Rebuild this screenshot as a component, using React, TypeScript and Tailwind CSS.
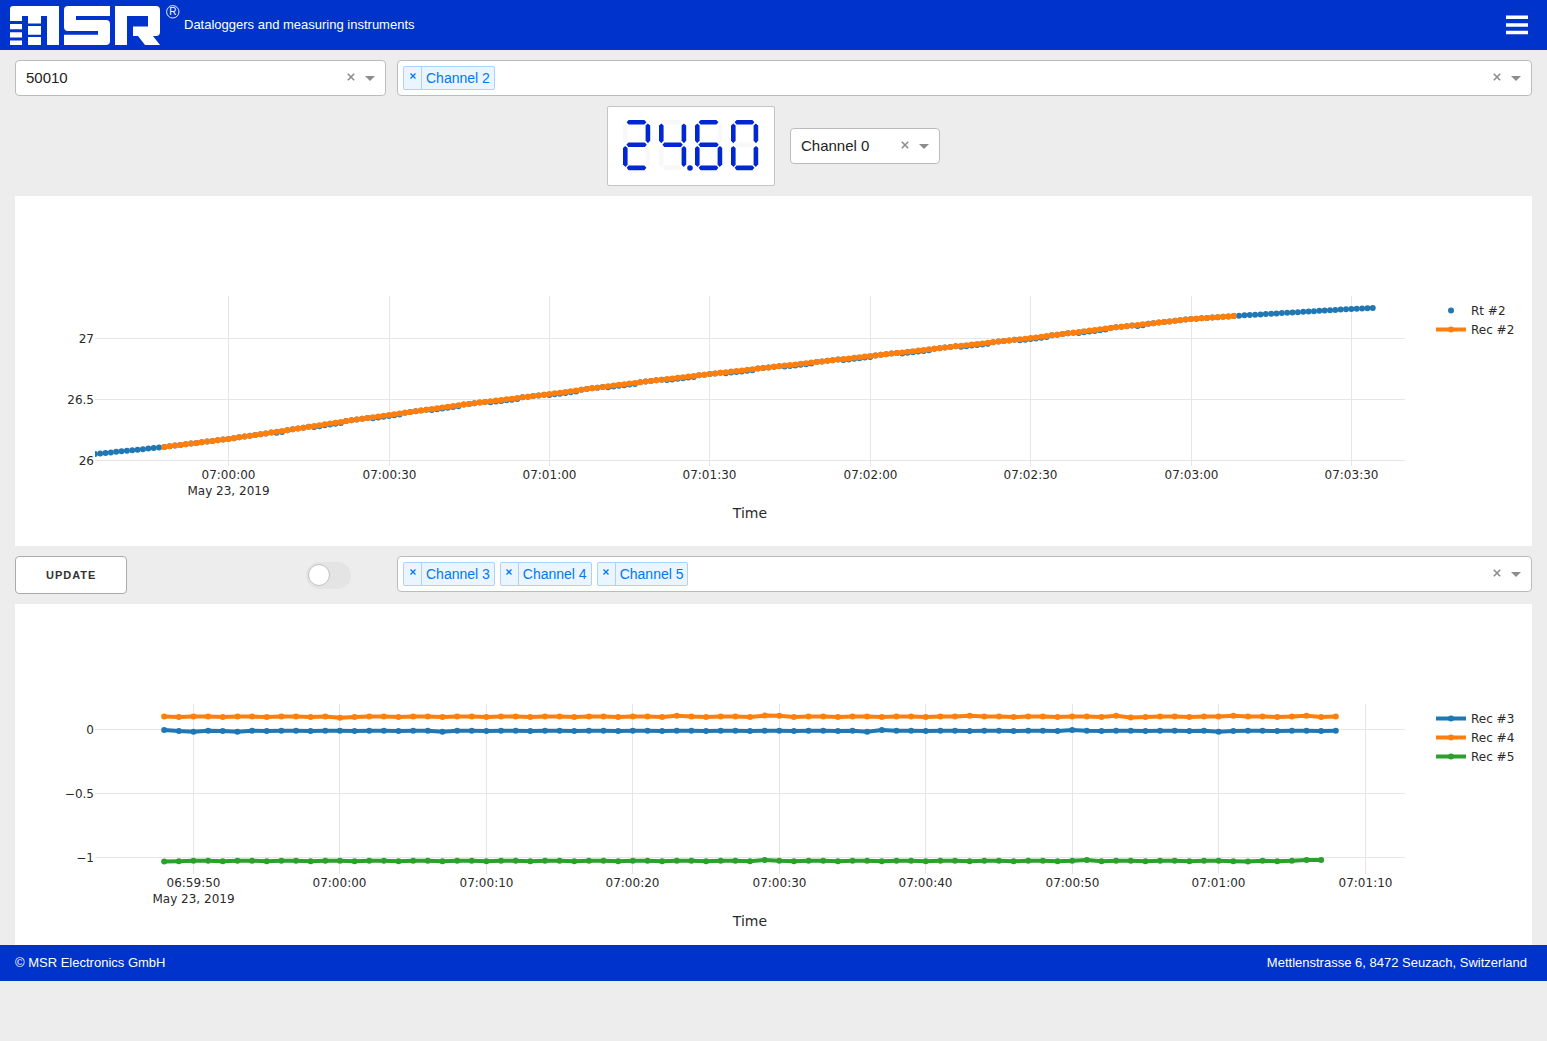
import React, { useState } from "react";

type Point = [number, number];
type Series = { name: string; color: string; points: Point[]; mode: "markers" | "lines" };
type Tick = { pos: number; label: string };

// piecewise curve of the temperature trace, in plot units
const RAMP: Point[] = [
  [80, 258], [149, 251], [213, 243], [267, 235], [325, 226], [374, 219], [445, 209], [535, 198],
  [602, 189], [695, 178], [775, 169], [855, 160], [935, 151], [1016, 142], [1095, 132],
  [1176, 123], [1219, 120], [1285, 116], [1336, 113], [1358, 112],
];

function rampAt(x: number) {
  let i = 1;
  while (i < RAMP.length - 1 && RAMP[i][0] < x) i++;
  const [x0, y0] = RAMP[i - 1];
  const [x1, y1] = RAMP[i];
  return y0 + ((x - x0) / (x1 - x0)) * (y1 - y0);
}

function rampPoints(from: number, to: number, lag: boolean): Point[] {
  const out: Point[] = [];
  for (let s = from; s <= to; s++) {
    const x = 213.5 + s * 5.347;
    const drop = lag && s > 8 && s < 172 && s % 11 > 4 ? 1 : 0;
    out.push([x, rampAt(x) + drop]);
  }
  return out;
}

function flatPoints(y: number, to: number, bumps: Record<number, number>): Point[] {
  const out: Point[] = [];
  for (let s = 0; s <= to; s++) {
    out.push([149.2 + s * 14.645, y + (bumps[s] ?? (s % 3 === 1 ? 0.4 : 0))]);
  }
  return out;
}

const BLUE = "#1f77b4";
const ORANGE = "#ff7f0e";
const GREEN = "#2ca02c";

const LIVE: Series[] = [
  { name: "Rt #2", color: BLUE, mode: "markers", points: rampPoints(-25, 214, true) },
  { name: "Rec #2", color: ORANGE, mode: "lines", points: rampPoints(-12, 188, false) },
];

const RECORDED: Series[] = [
  { name: "Rec #3", color: BLUE, mode: "lines", points: flatPoints(126.7, 80, { 0: -0.7, 2: 1, 5: 1, 19: 1, 48: 1, 49: -0.8, 62: -0.8, 72: 1 }) },
  { name: "Rec #4", color: ORANGE, mode: "lines", points: flatPoints(112.6, 80, { 12: 1.2, 35: -0.8, 41: -1, 42: -0.8, 55: -0.8, 65: -0.8, 66: 1, 73: -0.8, 78: -0.8 }) },
  { name: "Rec #5", color: GREEN, mode: "lines", points: flatPoints(256.8, 79, { 0: 0.6, 41: -0.8, 63: -0.8, 74: 0.8, 78: -0.8, 79: -0.8 }) },
];

const LIVE_X: Tick[] = [
  { pos: 213.5, label: "07:00:00" },
  { pos: 374.5, label: "07:00:30" },
  { pos: 534.5, label: "07:01:00" },
  { pos: 694.5, label: "07:01:30" },
  { pos: 855.5, label: "07:02:00" },
  { pos: 1015.5, label: "07:02:30" },
  { pos: 1176.5, label: "07:03:00" },
  { pos: 1336.5, label: "07:03:30" },
];
const LIVE_Y: Tick[] = [
  { pos: 142.5, label: "27" },
  { pos: 203.5, label: "26.5" },
  { pos: 264.5, label: "26" },
];
const REC_X: Tick[] = [
  { pos: 178.5, label: "06:59:50" },
  { pos: 324.5, label: "07:00:00" },
  { pos: 471.5, label: "07:00:10" },
  { pos: 617.5, label: "07:00:20" },
  { pos: 764.5, label: "07:00:30" },
  { pos: 910.5, label: "07:00:40" },
  { pos: 1057.5, label: "07:00:50" },
  { pos: 1203.5, label: "07:01:00" },
  { pos: 1350.5, label: "07:01:10" },
];
const REC_Y: Tick[] = [
  { pos: 125.5, label: "0" },
  { pos: 189.5, label: "−0.5" },
  { pos: 253.5, label: "−1" },
];

function Chart({ id, series, xTicks, yTicks, height }: { id: string; series: Series[]; xTicks: Tick[]; yTicks: Tick[]; height: number }) {
  return (
    <svg
      viewBox={`0 0 1517 ${height}`}
      className="block w-full h-auto bg-white font-['DejaVu_Sans',sans-serif]"
      role="img"
      aria-label={series.map((s) => s.name).join(", ")}
    >
      <clipPath id={id}>
        <rect x="80" y="100" width="1310" height="170" />
      </clipPath>
      <g stroke="#e6e6e6" strokeWidth="1">
        {xTicks.map((t) => <path key={t.label} d={`M${t.pos} 100V270`} />)}
        {yTicks.map((t) => <path key={t.label} d={`M80 ${t.pos}H1390`} />)}
      </g>
      <g clipPath={`url(#${id})`}>
        {series.map((s) => (
          <g key={s.name} fill={s.color}>
            {s.mode === "lines" && (
              <polyline points={s.points.map((p) => p.join(",")).join(" ")} fill="none" stroke={s.color} strokeWidth="4" />
            )}
            {s.points.map(([x, y]) => <circle key={x} cx={x} cy={y} r="3" />)}
          </g>
        ))}
      </g>
      <g fill="#2a2a2a" fontSize="12">
        {xTicks.map((t) => <text key={t.label} x={t.pos} y="283" textAnchor="middle">{t.label}</text>)}
        <text x={xTicks[0].pos} y="299" textAnchor="middle">May 23, 2019</text>
        {yTicks.map((t) => <text key={t.label} x="79" y={t.pos + 4} textAnchor="end">{t.label}</text>)}
        {series.map((s, i) => <text key={s.name} x="1456" y={119 + i * 19}>{s.name}</text>)}
      </g>
      <text x="735" y="322" textAnchor="middle" fontSize="14" fill="#2a2a2a">Time</text>
      {series.map((s, i) => (
        <g key={s.name} fill={s.color}>
          {s.mode === "lines" && <rect x="1421" y={112.5 + i * 19} width="30" height="4" />}
          <circle cx="1436" cy={114.5 + i * 19} r="3" />
        </g>
      ))}
    </svg>
  );
}

function Arrow() {
  return (
    <svg viewBox="0 0 10 5" className="w-[10px] h-[5px] shrink-0 pointer-events-none" aria-hidden="true">
      <path d="M0 0H10L5 5Z" fill="#8c8c8c" />
    </svg>
  );
}

function ClearButton({ label, onClick }: { label: string; onClick: () => void }) {
  return (
    <button aria-label={label} onClick={onClick} className="px-1 shrink-0">
      <svg viewBox="0 0 8 8" className="w-2 h-2 mb-0.5" aria-hidden="true">
        <path d="M0.8 0.8L7.2 7.2M7.2 0.8L0.8 7.2" stroke="#8c8c8c" strokeWidth="1.6" />
      </svg>
    </button>
  );
}

const BOX = "flex items-center gap-1.5 h-9 rounded border border-[#bcbcbc] bg-white pr-[10px]";

function Dropdown({ label, options }: { label: string; options: string[] }) {
  const [value, setValue] = useState(options[0]);
  return (
    <div className={BOX}>
      <select
        aria-label={label}
        value={value}
        onChange={(e) => setValue(e.target.value)}
        className="flex-1 min-w-0 h-full appearance-none bg-transparent pl-[10px] text-[15px] text-[#222] outline-none"
      >
        <option value="" />
        {options.map((o) => <option key={o}>{o}</option>)}
      </select>
      <ClearButton label={`Clear ${label}`} onClick={() => setValue("")} />
      <Arrow />
    </div>
  );
}

function MultiSelect({ label, initial }: { label: string; initial: string[] }) {
  const [tags, setTags] = useState(initial);
  return (
    <div className={BOX}>
      <div className="flex flex-1 items-center gap-[5px] pl-[5px]">
        {tags.map((t) => (
          <span key={t} className="flex h-6 rounded-xs border border-[#a8d3ff] bg-[#ebf5ff] text-[14px] leading-[22px] text-[#0078f5]">
            <button
              aria-label={`Remove ${t}`}
              onClick={() => setTags(tags.filter((x) => x !== t))}
              className="flex w-[18px] items-center justify-center border-r border-[#a8d3ff] pb-1"
            >
              <svg viewBox="0 0 6 6" className="w-[6px] h-[6px]" aria-hidden="true">
                <path d="M0.5 0.5L5.5 5.5M5.5 0.5L0.5 5.5" stroke="#0078f5" strokeWidth="1.3" />
              </svg>
            </button>
            <span className="px-1">{t}</span>
          </span>
        ))}
        <input aria-label={label} className="flex-1 min-w-0 bg-transparent text-[15px] outline-none" />
      </div>
      <ClearButton label={`Clear ${label}`} onClick={() => setTags([])} />
      <Arrow />
    </div>
  );
}

// segment shapes of one digit, drawn in a 27 x 50 cell
const SEGMENTS: Record<string, string> = {
  a: "M3.6 2.2L5.6 0H21.4L23.4 2.2L21.4 4.6H5.6Z",
  b: "M24.8 3.4L27.2 5.4V20.6L25 23.2L22.6 20.8V5.4Z",
  c: "M25 26L27.2 28V44.2L24.8 47L22.6 44.8V28Z",
  d: "M3.6 47.8L5.6 45.4H21.4L23.4 47.8L21.4 50.2H5.6Z",
  e: "M2.2 26L4.6 28V44.8L2.4 47L0 44.2V28Z",
  f: "M2.4 3.4L4.6 5.4V20.8L2.2 23.2L0 20.6V5.4Z",
  g: "M3.4 24.7L5.4 22.4H21.8L23.8 24.7L21.8 27H5.4Z",
};

const DIGITS: { on: string; dot?: boolean }[] = [
  { on: "abged" },
  { on: "fgbc", dot: true },
  { on: "afgedc" },
  { on: "abcdef" },
];

function LedDisplay() {
  return (
    <div className="rounded-xs border border-[#c4c4c4] bg-white px-[15px] py-[13px]">
      <svg viewBox="0 0 136 52" className="block w-[136px] h-[52px]" role="img" aria-label="24.60">
        {DIGITS.map((d, i) => (
          <g key={i} transform={`translate(${i * 36} 0)`}>
            {Object.keys(SEGMENTS).map((k) => (
              <path key={k} d={SEGMENTS[k]} fill={d.on.includes(k) ? "#0027d1" : "#f8f8f8"} />
            ))}
            {d.dot && <circle cx="31" cy="48" r="2.8" fill="#0027d1" />}
          </g>
        ))}
      </svg>
    </div>
  );
}

function Logo() {
  return (
    <svg viewBox="0 0 172 42" className="w-[172px] h-[42px] shrink-0" role="img" aria-label="MSR">
      <g transform="translate(-10 -4)" fill="#fff">
        <path d="M13 6H59V45H47V16H41V23.5H28V16H22V21H10V9Q10 6 13 6Z" />
        <path d="M10 24H22V29.3H10ZM10 32.3H22V37.5H10ZM10 40.5H22V45H10ZM28 26H41V34.7H28ZM28 37H41V45H28Z" />
        <path d="M68 6H110V16H76V20H106Q110 20 110 24V41Q110 45 106 45H64V34.7H98V31H68Q64 31 64 27V10Q64 6 68 6Z" />
        <path d="M115 6H156Q160 6 160 10V32Q160 36 156 36H153L160 45H145L138 36H133V26.5H148V16H127V45H115Z" />
      </g>
      <circle cx="162.8" cy="7.8" r="6.2" fill="none" stroke="#fff" strokeWidth="0.9" />
      <text x="162.8" y="11.4" fontSize="10" textAnchor="middle" fill="#fff">R</text>
    </svg>
  );
}

export default function App() {
  const [auto, setAuto] = useState(false);

  return (
    <div className="min-h-screen bg-[#ededed] font-['Liberation_Sans',Arial,sans-serif]">
      <header className="flex h-[50px] items-center bg-[#0033cc] pl-[10px] pr-[19px] text-white">
        <Logo />
        <span className="flex-1 pl-[2px] text-[13px]">Dataloggers and measuring instruments</span>
        <button aria-label="Menu">
          <svg viewBox="0 0 22 20" className="block w-[22px] h-5" aria-hidden="true">
            <path d="M0 0.5H22V4H0ZM0 8.2H22V11.7H0ZM0 15.7H22V19.2H0Z" fill="#fff" />
          </svg>
        </button>
      </header>

      <main className="flex flex-col gap-[10px] px-[15px] pt-[10px]">
        <div className="grid grid-cols-[371fr_1135fr] gap-[11px]">
          <Dropdown label="Device" options={["50010"]} />
          <MultiSelect label="Realtime channels" initial={["Channel 2"]} />
        </div>

        <div className="flex items-center justify-center gap-[15px]">
          <LedDisplay />
          <div className="w-[150px]">
            <Dropdown label="Display channel" options={["Channel 0"]} />
          </div>
        </div>

        <Chart id="live-plot" series={LIVE} xTicks={LIVE_X} yTicks={LIVE_Y} height={350} />

        <div className="grid grid-cols-[371fr_1135fr] gap-[11px]">
          <div className="flex items-center justify-between pr-[35px]">
            <button className="h-[38px] rounded border border-[#aaa] bg-white px-[30px] text-[11px] font-semibold uppercase tracking-[1px] text-[#333]">
              Update
            </button>
            <label className="flex h-[27px] w-[45px] cursor-pointer items-center rounded-full bg-[#e4e4e4] px-[2px]">
              <input
                type="checkbox"
                role="switch"
                aria-label="Automatic update"
                checked={auto}
                onChange={(e) => setAuto(e.target.checked)}
                className="h-[22px] w-[22px] appearance-none rounded-full border border-[#c0c0c0] bg-white checked:ml-auto"
              />
            </label>
          </div>
          <MultiSelect label="Recorded channels" initial={["Channel 3", "Channel 4", "Channel 5"]} />
        </div>

        <Chart id="rec-plot" series={RECORDED} xTicks={REC_X} yTicks={REC_Y} height={341} />
      </main>

      <footer className="flex h-9 items-center justify-between bg-[#0033cc] pl-[15px] pr-5 text-[13px] text-white">
        <span>© MSR Electronics GmbH</span>
        <span>Mettlenstrasse 6, 8472 Seuzach, Switzerland</span>
      </footer>
    </div>
  );
}
